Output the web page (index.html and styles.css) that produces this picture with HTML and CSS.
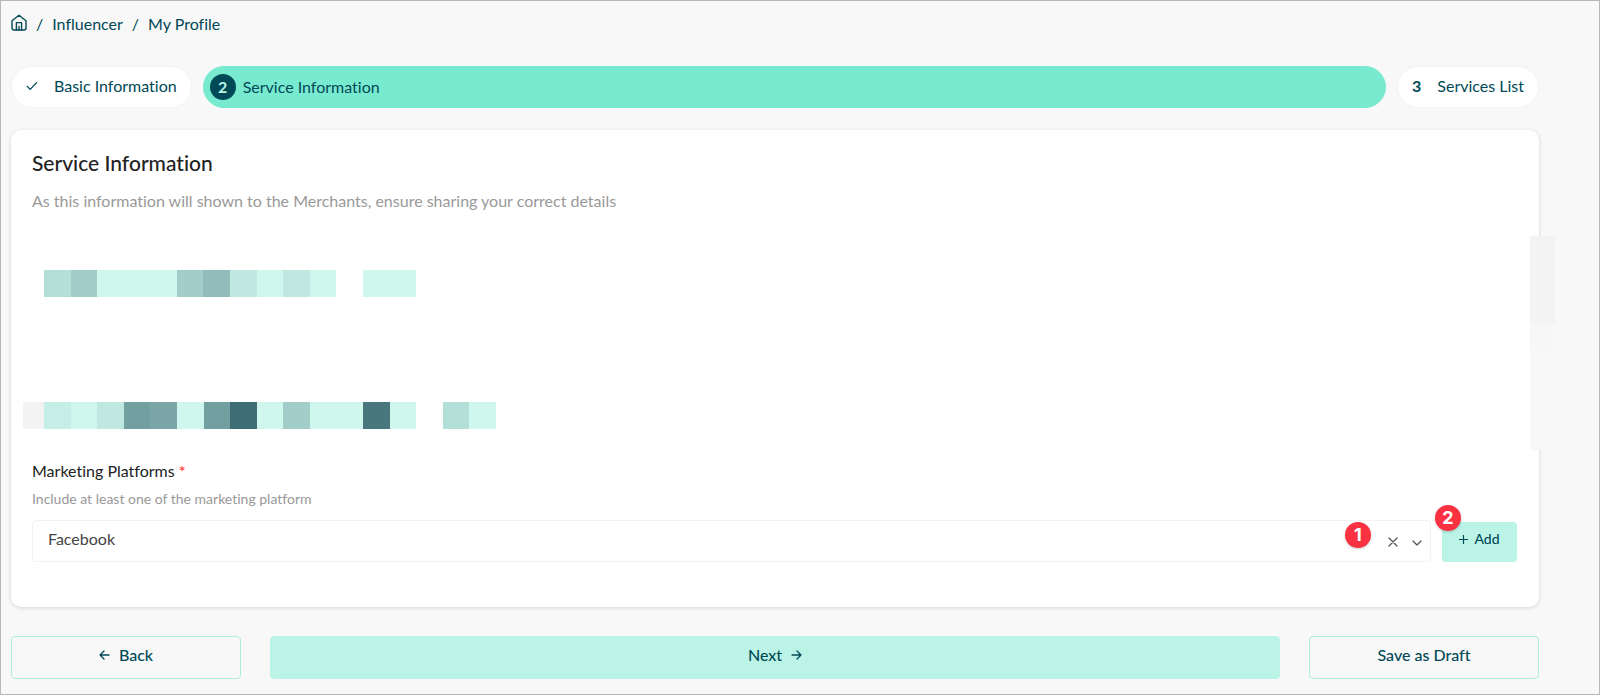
FILE: index.html
```html
<!DOCTYPE html>
<html lang="en">
<head>
  <meta charset="UTF-8" />
  <meta name="viewport" content="width=device-width, initial-scale=1.0"/>
  <title>My Profile - Service Information</title>
  <link rel="stylesheet" href="styles.css">
</head>
<body>

<div class="page">

  <!-- Breadcrumb -->
  <nav class="breadcrumb" aria-label="Breadcrumb">
    <a href="#home" class="home-link" aria-label="Home">
      <svg width="16" height="20" viewBox="0 0 16 20" fill="none" stroke="currentColor" stroke-width="1.4" stroke-linejoin="round" stroke-linecap="round">
        <path d="M1 6.8 8 1.2l7 5.6V14a2 2 0 0 1-2 2H3a2 2 0 0 1-2-2z"/>
        <path d="M5.4 16V8.6h5.2V16M8 16v-3.6"/>
      </svg>
    </a>
    <span>/</span>
    <a href="#influencer">Influencer</a>
    <span>/</span>
    <a href="#profile">My Profile</a>
  </nav>

  <!-- Steps -->
  <div class="steps">
    <button type="button" class="step">
      <svg class="step-check" width="12" height="10" viewBox="0 0 12 10" fill="none" stroke="currentColor" stroke-width="1.3" stroke-linecap="round" stroke-linejoin="round"><path d="M1.2 5.4 4.2 8.4 10.6 1.6"/></svg>
      Basic Information
    </button>
    <button type="button" class="step active" aria-current="step">
      <span class="step-number">2</span>
      Service Information
    </button>
    <button type="button" class="step">
      <b>3</b>
      Services List
    </button>
  </div>

  <!-- Service form -->
  <main class="card">
    <h1>Service Information</h1>
    <p class="subtitle">As this information will shown to the Merchants, ensure sharing your correct details</p>

    <div class="mosaic mosaic-first">
      <i class="c1"></i><i class="c2"></i><i></i><i></i><i></i><i class="c2"></i><i class="c3"></i><i class="c4"></i><i></i><i class="c4"></i><i></i><i class="none"></i><i></i><i></i>
    </div>
    <div class="mosaic-row">
      <span class="mosaic-edge"></span>
      <div class="mosaic mosaic-second">
        <i class="c5"></i><i></i><i class="c4"></i><i class="c6"></i><i class="c7"></i><i></i><i class="c6"></i><i class="c8"></i><i></i><i class="c2"></i><i></i><i></i><i class="c9"></i><i></i><i class="none"></i><i class="c1"></i><i></i>
      </div>
    </div>

    <label class="field-label" for="platform">Marketing Platforms <span class="required">*</span></label>
    <p class="hint">Include at least one of the marketing platform</p>

    <div class="platform-row">
      <div class="select-box">
        <select id="platform">
          <option>Facebook</option>
        </select>
        <button type="button" class="clear-btn" aria-label="Clear">
          <svg width="10" height="10" viewBox="0 0 10 10" fill="none" stroke="currentColor" stroke-width="1.3" stroke-linecap="round"><path d="M1 1l8 8M9 1L1 9"/></svg>
        </button>
        <svg class="arrow" width="10" height="6" viewBox="0 0 10 6" fill="none" stroke="currentColor" stroke-width="1.3" stroke-linecap="round" stroke-linejoin="round"><path d="M1 1l4 4 4-4"/></svg>
        <span class="marker marker-select">1</span>
      </div>
      <div class="add-box">
        <button type="button" class="add-btn">
          <svg width="9" height="9" viewBox="0 0 9 9" fill="none" stroke="currentColor" stroke-width="1.2"><path d="M4.5 0v9M0 4.5h9"/></svg>
          Add
        </button>
        <span class="marker marker-add">2</span>
      </div>
    </div>

    <div class="side-shade"></div>
  </main>

  <!-- Actions -->
  <div class="actions">
    <button type="button" class="outline-btn">
      <svg width="11" height="10" viewBox="0 0 11 10" fill="none" stroke="currentColor" stroke-width="1.3" stroke-linecap="round" stroke-linejoin="round"><path d="M10 5H1M5 1 1 5l4 4"/></svg>
      Back
    </button>
    <button type="button" class="next-btn">
      Next
      <svg width="11" height="10" viewBox="0 0 11 10" fill="none" stroke="currentColor" stroke-width="1.3" stroke-linecap="round" stroke-linejoin="round"><path d="M1 5h9M6 1l4 4-4 4"/></svg>
    </button>
    <button type="button" class="outline-btn">Save as Draft</button>
  </div>

</div>

</body>
</html>
```
FILE: styles.css
```css
* {
  box-sizing: border-box;
}

body {
  margin: 0;
  font-family: Lato, sans-serif;
  font-size: 16px;
  font-variant-ligatures: none;
  line-height: 20px;
  color: #004956;
  background: #f8f8f8;
}

button, select {
  font: inherit;
  font-variant-ligatures: none;
  color: inherit;
  cursor: pointer;
}

.page {
  min-height: 100vh;
  padding: 13px 60px 14px 10px;
  border: 1px solid #b8b8b8;
}

.breadcrumb {
  display: flex;
  align-items: center;
  gap: 9px;
  height: 20px;
}

.breadcrumb a {
  color: inherit;
  text-decoration: none;
}

.home-link {
  display: flex;
}

.steps {
  display: flex;
  gap: 11px;
  margin-top: 32px;
}

.step {
  display: flex;
  align-items: center;
  gap: 16px;
  height: 42px;
  padding: 0 14px 2px;
  background: #fff;
  border: 1px solid #f3f3f3;
  border-radius: 21px;
}

.step.active {
  flex: 1;
  gap: 7px;
  padding: 0 6px;
  background: #78ead0;
  border-color: #78ead0;
}

.step-number {
  display: flex;
  align-items: center;
  justify-content: center;
  width: 26px;
  height: 26px;
  border-radius: 50%;
  background: #004956;
  color: #bbf4e6;
  font-weight: bold;
}

.card {
  position: relative;
  margin-top: 22px;
  padding: 21px 22px 45px 21px;
  background: #fff;
  border-radius: 10px;
  box-shadow: 0 1px 4px rgba(0, 0, 0, 0.14);
}

h1 {
  margin: 0;
  font-size: 21px;
  line-height: 24px;
  font-weight: 500;
  color: #222;
}

.subtitle {
  margin: 16px 0 0;
  color: #999;
}

/* blurred-out lines */
.mosaic {
  display: grid;
  grid-auto-flow: column;
  grid-auto-columns: 1fr;
  height: 27px;
}

.mosaic-first {
  width: 372px;
  margin: 59px 0 0 12px;
}

.mosaic-second {
  width: 452px;
}

.mosaic-row {
  display: flex;
  margin: 105px 0 0 -9px;
}

.mosaic-edge {
  width: 21px;
  background: #f3f3f3;
}

.mosaic i { background: #cff7ee; }
.mosaic .c1 { background: #b4ded8; }
.mosaic .c2 { background: #a2cdc8; }
.mosaic .c3 { background: #92bbbc; }
.mosaic .c4 { background: #bfe9e0; }
.mosaic .c5 { background: #c5eee6; }
.mosaic .c6 { background: #729fa0; }
.mosaic .c7 { background: #7ba5a6; }
.mosaic .c8 { background: #3d6d75; }
.mosaic .c9 { background: #49777e; }
.mosaic .none { background: none; }

.field-label {
  display: block;
  margin-top: 32px;
  color: #222;
}

.required {
  color: #ff4d4f;
  font-weight: bold;
}

.hint {
  margin: 8px 0 0;
  font-size: 14px;
  color: #999;
}

.platform-row {
  display: flex;
  gap: 11px;
  margin-top: 11px;
}

.select-box {
  position: relative;
  flex: 1;
}

.select-box select {
  display: block;
  width: 100%;
  height: 42px;
  padding: 0 60px 4px 15px;
  appearance: none;
  background: #fff;
  border: 1px solid #f2f2f2;
  border-radius: 4px;
  color: #444;
}

.clear-btn {
  position: absolute;
  top: 17px;
  right: 33px;
  display: flex;
  padding: 0;
  border: none;
  background: none;
  color: #555;
}

.arrow {
  position: absolute;
  top: 20px;
  right: 9px;
  color: #555;
  pointer-events: none;
}

.add-box {
  position: relative;
  padding-top: 2px;
}

.add-btn {
  display: flex;
  align-items: center;
  justify-content: center;
  gap: 6px;
  width: 75px;
  height: 40px;
  padding: 0 0 6px;
  border: none;
  border-radius: 4px;
  background: #bbf4e6;
  font-size: 14px;
  font-weight: 500;
}

.marker {
  position: absolute;
  display: flex;
  align-items: center;
  justify-content: center;
  width: 26px;
  height: 26px;
  border-radius: 50%;
  background: #fa3140;
  box-shadow: 0 1px 3px rgba(0, 0, 0, 0.2);
  color: #fff;
  font-family: Inter, sans-serif;
  font-size: 18px;
  font-weight: bold;
}

.marker-select {
  top: 2px;
  right: 60px;
}

.marker-add {
  top: -15px;
  left: -7px;
}

.side-shade {
  position: absolute;
  top: 106px;
  right: -16px;
  width: 25px;
  height: 214px;
  background: linear-gradient(#f3f3f3 88px, #f7f7f7 88px, #f7f7f7 114px, #f8f8f8 114px);
}

.actions {
  display: grid;
  grid-template-columns: 230px 1fr 230px;
  gap: 29px;
  margin-top: 29px;
}

.actions button {
  display: flex;
  align-items: center;
  justify-content: center;
  gap: 9px;
  height: 43px;
  padding: 0 0 5px;
  border: 1px solid #bbf4e6;
  border-radius: 4px;
  font-weight: 500;
}

.actions .outline-btn {
  background: #f8f8f8;
  border-color: #aeeee0;
}

.next-btn {
  background: #bbf4e6;
}
```
